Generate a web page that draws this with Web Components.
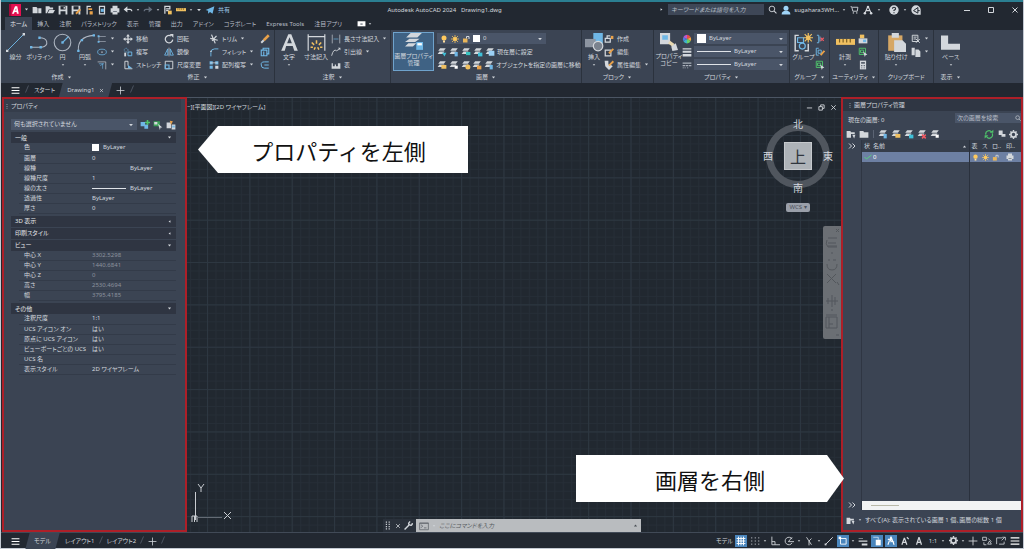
<!DOCTYPE html>
<html lang="ja">
<head>
<meta charset="utf-8">
<title>Autodesk AutoCAD 2024 Drawing1.dwg</title>
<style>
:root{
  --bg:#222831; --panel:#3b4453; --head:#2f3542; --field:#4a5568; --text:#d3d8de; --dim:#8b929e;
  --accent:#6fb7e6; --red:#ad1f28;
}
html{height:100%}
body{margin:0;min-height:100vh;box-sizing:border-box;display:flex;background:var(--bg);color:var(--text);
  font:6px/10px "Noto Sans","Noto Sans CJK JP",sans-serif;font-feature-settings:"palt"}
</style>
</head>
<body>
<cad-app></cad-app>
<script>
const RESET = `*{box-sizing:border-box}
button,input,select{font:inherit;color:inherit;font-feature-settings:inherit;background:none;border:0;padding:0;margin:0;border-radius:0;outline:0;min-width:0}
button{cursor:pointer;white-space:nowrap}a{color:inherit;text-decoration:none}`;
function define(name, css, html){
  customElements.define(name, class extends HTMLElement{
    constructor(){ super(); this.attachShadow({mode:'open'}); }
    connectedCallback(){
      const t = document.createElement('template');
      t.innerHTML = '<style>' + RESET + css + '</style>' + (typeof html === 'function' ? html(this) : html);
      this.shadowRoot.replaceChildren(t.content.cloneNode(true));
    }
  });
}

/* ---------- icons, 16 x 16 grid ---------- */
const W='#d3d7dc', B='#6fb7e6', Y='#f0c060', G='#4fc36b', O='#e8a14a';
const layers = c => `<path fill="${W}" d="M5 2h9l-3 4H2zM4 7h8l-3 4H1z"/>${c}`;
const ICONS = {
  down:`<path fill="${W}" d="M3 5h10l-5 6z"/>`,
  left:`<path fill="${W}" d="M11 4v8L5 8z"/>`,
  right:`<path fill="${W}" d="M5 4v8l6-4z"/>`,
  up:`<path fill="${W}" d="M3 11h10L8 5z"/>`,
  updark:`<path fill="#4a4f55" d="M3 11h10L8 5z"/>`,
  close:`<path stroke="${W}" stroke-width="2" d="M3 3l10 10M13 3L3 13"/>`,
  min:`<path stroke="${W}" stroke-width="2" d="M2 9h12"/>`,
  max:`<path fill="none" stroke="${W}" stroke-width="2" d="M3 3h10v10H3z"/>`,
  restore:`<path fill="none" stroke="${W}" stroke-width="2" d="M2 6h8v8H2zM6 6V2h8v8h-4"/>`,
  plus:`<path stroke="${W}" stroke-width="1.4" d="M8 1v14M1 8h14"/>`,
  menu:`<path stroke="#fff" stroke-width="1.8" d="M1 3h14M1 8h14M1 13h14"/>`,
  chev:`<path fill="none" stroke="${W}" stroke-width="2" d="M2 3l5 5-5 5M9 3l5 5-5 5"/>`,
  grip:`<path stroke="${W}" stroke-width="2" stroke-dasharray="2 2" d="M6 1v14M11 1v14"/>`,
  dots:`<path stroke="${W}" stroke-width="2" stroke-dasharray="2 3" d="M8 3v12"/>`,
  slash:`<path stroke="#5a6270" stroke-width="1.5" d="M11 1L5 15"/>`,
  logo:`<path fill="#e51050" d="M0 0h16v16H0z"/><path fill="#a30c3b" d="M0 0h3v16H0z"/><path fill="#fff" fill-rule="evenodd" d="M4 13L8 3h3l2 10h-2.500l-.4-2.500H7.500L6.500 13zM8.200 8.600h1.700L9.500 5.500z"/>`,
  new:`<path fill="${W}" d="M1 3h6l2 2v8H1zM10 5h5v8h-5z"/>`,
  open:`<path fill="${W}" d="M1 2h6l1 2h5v3H6l-3 6H1zM7 8h9l-3 5H4z"/>`,
  save:`<path fill="${W}" fill-rule="evenodd" d="M1 1h14v14H1zM4 2v5h8V2zM4 10v5h8v-5z"/><path fill="${W}" d="M9 3h2v3H9z"/>`,
  saveas:`<path fill="${W}" fill-rule="evenodd" d="M1 1h14v14H1zM4 2v5h8V2zM4 10v5h8v-5z"/><path stroke="${O}" stroke-width="3" d="M15 7l-7 7"/>`,
  webopen:`<path fill="none" stroke="${W}" stroke-width="2" d="M5 15V2h6"/><path fill="${O}" d="M7 5h6v3H7zM9 10h5v5H9z"/>`,
  websave:`<path fill="none" stroke="${W}" stroke-width="2" d="M4 2h8v12H4z"/><path fill="${B}" d="M6 6h5v5H6z"/>`,
  print:`<path fill="${W}" d="M4 1h8v4H4zM1 5h14v7h-3v3H4v-3H1z"/><path fill="#3b4453" d="M5 10h6v1H5z"/>`,
  undo:`<path fill="none" stroke="${W}" stroke-width="2" d="M4 7h7q3 0 3 3"/><path fill="${W}" d="M7 2v10L1 7z"/>`,
  redo:`<path fill="none" stroke="#66707e" stroke-width="2" d="M12 7H5q-3 0-3 3"/><path fill="#66707e" d="M9 2v10l6-5z"/>`,
  sheet:`<path fill="none" stroke="${W}" stroke-width="2" d="M3 14V2h8v5M5 6h5M5 9h4"/><path fill="${Y}" d="M8 9h6v6H8z"/>`,
  ruler:`<path fill="${Y}" d="M0 5h16v5H0z"/><path stroke="#7c5f22" d="M3 5v3M6 5v3M9 5v3M12 5v3"/>`,
  send:`<path fill="${B}" d="M1 8l14-6-3 12-4-3-3 3V9z"/>`,
  search:`<circle cx="7" cy="7" r="5" fill="none" stroke="${W}" stroke-width="1.600"/><path stroke="${W}" stroke-width="2" d="M11 11l4 4"/>`,
  user:`<circle cx="8" cy="5" r="4" fill="#9fd4f7"/><path fill="#9fd4f7" d="M1 15q0-6 7-6t7 6z"/>`,
  cart:`<path fill="none" stroke="${W}" stroke-width="1.600" d="M1 3h2l2 8h8l1-7H4"/><circle cx="6" cy="14" r="1.300" fill="${W}"/><circle cx="12" cy="14" r="1.300" fill="${W}"/>`,
  appA:`<path fill="none" stroke="${W}" stroke-width="1.800" d="M8 2l5 11M8 2L3 13M5 9h6"/><circle cx="8" cy="3" r="2" fill="${W}"/><circle cx="3" cy="13" r="2" fill="${W}"/><circle cx="13" cy="13" r="2" fill="${W}"/>`,
  help:`<circle cx="8" cy="8" r="7.500" fill="${W}"/><path fill="none" stroke="#222831" stroke-width="1.800" d="M5.500 6q0-2.500 2.500-2.500T10.500 6Q10.500 7.500 8 8.500v1.200M8 11.500v1.500"/>`,
  bubble:`<path fill="${W}" d="M8 .5a7.500 7.500 0 0 1 7.500 7.500v7.500H8A7.500 7.500 0 0 1 8 .5z"/><path fill="none" stroke="#222831" stroke-width="1.600" d="M4 9l7-5v9zM11 9h3"/>`,
  line:`<path stroke="${B}" stroke-width=".8" d="M1 15L15 1"/><path fill="${W}" d="M0 14h2v2H0zM14 0h2v2h-2z"/>`,
  poly:`<path fill="none" stroke="#aeb6c1" stroke-width=".9" d="M1 12h9q5-1 4-5-1-3-6-3"/><path fill="${B}" d="M0 11h2v2H0zM8 11h2v2H8zM7 3h2v2H7z"/>`,
  circle:`<circle cx="8" cy="8" r="7" fill="none" stroke="#aeb6c1" stroke-width=".9"/><path stroke="${B}" d="M8 8l5-5"/><path fill="${B}" d="M7 7h2v2H7z"/>`,
  arc:`<path fill="none" stroke="#aeb6c1" stroke-width=".9" d="M2 15Q1 3 15 2"/><path fill="${B}" d="M1 14h2v2H1zM4 5h2v2H4zM14 1h2v2h-2z"/>`,
  rect:`<path fill="none" stroke="#aeb6c1" d="M2 4h12M2 12h12M3 3v10"/><path fill="${B}" d="M1 2h3v3H1zM1 11h3v3H1z"/>`,
  ellipse:`<ellipse cx="8" cy="8" rx="7" ry="4.500" fill="none" stroke="${B}" stroke-width="1.200"/><path fill="${W}" d="M7 7h2v2H7z"/>`,
  hatch:`<path fill="none" stroke="${W}" d="M1 3h13v12"/><path stroke="${B}" d="M3 6h8M5 9l5-3M9 14V6"/>`,
  move:`<path stroke="${W}" stroke-width="2" d="M8 2v12M2 8h12"/><path fill="${W}" d="M8 0l3 4H5zM8 16l3-4H5zM0 8l4-3v6zM16 8l-4-3v6z"/>`,
  copy:`<circle cx="5" cy="5" r="3" fill="none" stroke="${B}" stroke-dasharray="2 1"/><path fill="none" stroke="${B}" stroke-width="1.500" d="M8 8h6v6H8z"/><path fill="${W}" d="M2 9h3v6H2z"/>`,
  stretch:`<path fill="none" stroke="${W}" stroke-width="1.500" d="M3 14V2h5v7M3 14h12"/><path fill="${B}" d="M8 8l7 5H8z"/>`,
  rotate:`<path fill="none" stroke="${W}" stroke-width="2" d="M11 3a6 6 0 1 0 3 6"/><path fill="${W}" d="M9 0h6v6z"/>`,
  mirror:`<path fill="none" stroke="${B}" stroke-width="1.400" d="M6 3v10H1zM10 3v10h5z"/><path stroke="${W}" d="M8 1v14"/>`,
  scale:`<path fill="none" stroke="${W}" stroke-width="1.500" d="M2 2h12v12H2z"/><path fill="none" stroke="${B}" stroke-width="1.800" d="M2 8h6v6H2z"/>`,
  trim:`<path fill="none" stroke="${W}" stroke-width="2" d="M4 1l6 14M12 3L5 11M2 7l12 3"/>`,
  fillet:`<path fill="none" stroke="${B}" stroke-width="1.500" d="M3 15V9q0-6 6-6h6"/><path fill="${W}" d="M2 6h2v2H2z"/>`,
  array:`<path fill="${B}" d="M1 2h5v5H1zM10 2h5v5h-5zM1 9h5v5H1z"/><path fill="${W}" d="M10 9h5v5h-5zM2 4h12v1H2z"/>`,
  erase:`<path stroke="${O}" stroke-width="4" d="M14 2L6 10"/><path stroke="${W}" stroke-width="3" d="M6 10l-4 4"/>`,
  explode:`<path fill="none" stroke="${B}" stroke-width="1.800" d="M2 5h9v9H2zM5 5V2h9v9h-3M6 7v6"/>`,
  offset:`<path fill="none" stroke="${B}" stroke-width="1.600" d="M14 3H7Q1 3 2 8q0 5 5 5h7M14 8H7"/>`,
  text:`<path fill="${W}" fill-rule="evenodd" d="M1 15L7 1h2.500l5.500 14h-3l-1.300-4H5.200L4 15zM6 8.600h4L8 3.500z"/>`,
  dim:`<path stroke="${W}" d="M1 1v14M15 1v14M1 3h14"/><path stroke="${Y}" stroke-width="1.300" d="M8 6v3M4 8l2 2M12 8l-2 2M3 12h2M11 12h2M6 14l1-2M10 14l-1-2"/>`,
  lindim:`<path stroke="${W}" d="M2 1v14M14 1v14"/><path stroke="${B}" d="M4 8h8"/>`,
  leader:`<path fill="none" stroke="${W}" stroke-width="1.400" d="M1 14Q4 2 9 6l5-3"/><path fill="${W}" d="M11 1h4v4z"/>`,
  table:`<path fill="${W}" fill-rule="evenodd" d="M1 5h2v5h3V7h2v3h3V5h4v9H1z"/>`,
  layerprop:`<path fill="${W}" d="M5 0h10l-4 4H1zM4 5h9l-4 3H0zM3 9h7l-3 3H0z"/><path fill="${B}" d="M10 8h6v7h-6z"/><path fill="#fff" d="M11 9h4v2h-4z"/>`,
  bulb:`<circle cx="8" cy="6" r="5" fill="#ffc95e"/><path fill="#ffe0a0" d="M6 11h4v4H6z"/>`,
  sun:`<circle cx="8" cy="8" r="4" fill="#ffc95e"/><path stroke="#ffc95e" stroke-width="1.500" d="M8 0v16M0 8h16M2 2l12 12M14 2L2 14"/>`,
  lock:`<path fill="#e9b65a" d="M2 7h9v8H2z"/><path fill="none" stroke="${W}" stroke-width="2" d="M9 7V3h5v5"/>`,
  white:`<path fill="#fff" d="M0 0h16v16H0z"/>`,
  lyA:layers('<path fill="#3fc0d8" d="M8 9h7l-3 6z"/>'), lyB:layers(`<path fill="${B}" d="M9 8h5v7H9z"/>`),
  lyC:layers('<path fill="#38c3c0" d="M8 8h7v5H8z"/>'), lyD:layers('<path fill="#3fc0d8" d="M8 9h7v6H8z"/>'),
  lyE:layers('<path fill="#9bd0f5" d="M6 6h9v8H6z"/>'), lyF:layers(`<path fill="${Y}" d="M7 8h8v6H7z"/>`),
  lyG:layers(`<path fill="#fff" d="M9 9h5v5H9z"/>`), lyH:layers(`<circle cx="11" cy="11" r="4" fill="${Y}"/>`),
  lyI:layers(`<path fill="${O}" d="M8 9h7v6H8z"/>`), lyR:layers('<path stroke="#ef5a63" stroke-width="2.500" d="M8 9l6 6M14 9l-6 6"/>'),
  insert:`<path fill="${B}" d="M7 0h8v9H7z"/><path fill="#8d95a1" d="M0 5h9v7H0z"/><circle cx="11" cy="11" r="4" fill="#7a828e" stroke="${W}"/>`,
  blk:`<path fill="none" stroke="${W}" stroke-width="2" d="M2 7h8v6H2zM5 7V3h5"/><path fill="${O}" d="M11 3h4v5h-4z"/>`,
  blkedit:`<path fill="none" stroke="${W}" stroke-width="2" d="M2 5h9v9H2z"/><path stroke="${O}" stroke-width="3" d="M15 3l-7 7"/>`,
  attr:`<path fill="${W}" d="M1 1h6v6h3l4 3-6 6-6-6z"/><path stroke="${O}" stroke-width="3" d="M15 2L8 9"/>`,
  match:`<path fill="${W}" d="M0 0h9v10H0z"/><path fill="${B}" d="M2 2h5v4H2z"/><path stroke="#e8d8b0" stroke-width="3" d="M8 8l4 3"/><path fill="${W}" d="M10 12l4-3 2 6-5 1z"/>`,
  wheel:`<path fill="#e94b4b" d="M8 8V1a7 7 0 0 1 6 4z"/><path fill="#f2a23c" d="M8 8l6-3a7 7 0 0 1 0 6z"/><path fill="#6ad067" d="M8 8l6 3a7 7 0 0 1-6 4z"/><path fill="#3fb4c8" d="M8 8v7a7 7 0 0 1-6-4z"/><path fill="#4c7de0" d="M8 8l-6 3a7 7 0 0 1 0-6z"/><path fill="#b55ad0" d="M8 8L2 5a7 7 0 0 1 6-4z"/>`,
  lw:`<path fill="${W}" d="M1 2h14v2H1zM1 6h14v3H1zM1 11h14v4H1z"/>`,
  lt:`<path fill="#aab1bb" d="M1 4h14v2H1zM1 8h4v2H1zM6 8h4v2H6zM11 8h4v2h-4zM1 12h2v1H1zM4 12h2v1H4zM8 12h2v1H8z"/>`,
  group:`<path fill="none" stroke="${W}" stroke-width="1.200" d="M4 2H1v13h3M9 15h3V9"/><path fill="none" stroke="${B}" d="M3 4h5v4H3z"/><circle cx="7" cy="11" r="2.500" fill="none" stroke="${B}"/><path stroke="${Y}" stroke-width="1" d="M12 0v8M8 4h8M9 1l6 6M15 1L9 7"/><circle cx="12" cy="4" r="2" fill="${Y}"/>`,
  ungroup:`<path fill="none" stroke="${B}" stroke-width="1.500" d="M3 2h3v12H3M8 4v8"/><path stroke="#ef5a63" stroke-width="1.800" d="M9 6l5 5M14 6l-5 5"/>`,
  gedit:`<path fill="none" stroke="${B}" stroke-width="1.500" d="M6 2H2v11h4M5 5h5v5H5z"/><path stroke="${O}" stroke-width="3" d="M15 6l-6 7"/>`,
  gsel:`<path fill="none" stroke="${G}" stroke-width="1.500" d="M2 2h10v10H2zM4 5h5v4H4z"/><path fill="${W}" d="M8 7l7 5-3 1-1 3z"/>`,
  paste2:`<path fill="${Y}" d="M3 1h7v6H3z"/><path fill="${W}" d="M1 7h14v8H1z"/><path fill="${B}" d="M8 9h5v4H8z"/>`,
  calc:`<path fill="${W}" d="M3 1h10v14H3z"/><path fill="#59616e" d="M5 3h6v3H5zM5 8h2v2H5zM9 8h2v2H9zM5 12h2v1H5zM9 12h2v1H9z"/>`,
  clip:`<path fill="#d6a765" d="M1 2h12v13H1z"/><path fill="${W}" d="M4 0h6v4H4zM6 6h7l3 3v7H6z"/>`,
  cut:`<path fill="none" stroke="${W}" stroke-width="1.500" d="M2 2h9v10H2zM4 5h5M4 8h4"/><path stroke="${W}" stroke-width="1.500" d="M8 8l6 6M14 8l-6 6"/>`,
  pages:`<path fill="${W}" d="M1 1h5v12H1zM7 4h5l3 3v9H7z"/>`,
  base:`<path fill="${W}" d="M0 2h6v7h10v5H0z"/>`,
  pickadd:`<path fill="${B}" d="M1 3h7v7H1zM7 7h6v7H7z"/><path stroke="${G}" stroke-width="2.500" d="M12 0v8M8 4h8"/>`,
  pick:`<path fill="#3aa356" d="M1 2h10v8H1z"/><path fill="${W}" d="M2 3h5v4H2zM8 6l7 6-3 0-1 4z"/>`,
  quick:`<path fill="${W}" d="M1 4h7v9H1zM9 7h6v8H9z"/><path fill="${O}" d="M6 1l5 1-3 6z"/><path fill="${B}" d="M10 9h4v3h-4z"/>`,
  fnew:`<path fill="${W}" d="M1 3h6l1 2h6v3H8v6H1z"/><path fill="${W}" d="M10 9l5 0-2 6z"/>`,
  folder:`<path fill="${W}" d="M1 3h6l1 2h7v9H1z"/>`,
  refresh:`<path fill="none" stroke="${G}" stroke-width="2" d="M3 9a5 5 0 0 1 9-4M13 7a5 5 0 0 1-9 5"/><path fill="${G}" d="M9 6h6V1zM7 10H1v5z"/>`,
  toggle:`<path fill="${W}" d="M3 1h7v8H3zM8 7h7v5H8z"/>`,
  gear:`<circle cx="8" cy="8" r="4.500" fill="none" stroke="${W}" stroke-width="3"/><path stroke="${W}" stroke-width="2.500" d="M8 0v3M8 13v3M0 8h3M13 8h3M2.500 2.500l2 2M11.500 11.500l2 2M13.500 2.500l-2 2M4.500 11.500l-2 2"/>`,
  check:`<path fill="none" stroke="#57cf7c" stroke-width="2" d="M1 8l4 4 10-8"/>`,
  share:`<path fill="#fff" d="M1 4h14v9H1z"/><path fill="#59616e" d="M6 8h4v2H6z"/>`,
  wrench:`<path fill="none" stroke="${W}" stroke-width="2.500" d="M1 15l8-8"/><path fill="none" stroke="${W}" stroke-width="2.500" d="M11 1q-5 4-1 6t5-3"/>`,
  prompt:`<path fill="none" stroke="#6a6f75" stroke-width="1.400" d="M1 3h14v11H1zM3 6l3 2-3 3M8 11h4M1 4h14"/>`,
  grid:`<path stroke="#fff" stroke-width="1.500" d="M4 1v14M8 1v14M12 1v14M1 4h14M1 8h14M1 12h14"/>`,
  snap:`<path stroke="${W}" stroke-width="1.600" stroke-dasharray="1.600 4" d="M2 3h14M2 8h14M2 13h14"/>`,
  ortho:`<path fill="none" stroke="${W}" stroke-width="1.400" d="M3 1v13h13M3 9h5v5"/>`,
  polar:`<path fill="none" stroke="${W}" stroke-width="1.400" d="M13 5a6 6 0 1 0 0 6M7 9h9M7 9l6-7"/>`,
  iso:`<path fill="none" stroke="${W}" stroke-width="1.400" d="M4 2l4 6v7M8 8l4 6M8 8l4-4"/>`,
  track:`<path stroke="${W}" stroke-width="1.500" d="M2 14L14 2"/><path fill="${W}" d="M1 12h3v3H1z"/>`,
  osnap:`<path fill="none" stroke="#fff" stroke-width="1.400" d="M4 4h9v9H4z"/><path fill="#fff" d="M1 1h4v4H1z"/>`,
  lwt:`<path fill="${W}" d="M1 3h7v1H1zM1 7h14v2H1zM6 12h9v3H6z"/>`,
  cycle:`<path fill="#fff" d="M6 6h8v9H6z"/><path fill="none" stroke="#fff" d="M2 2h8v4"/>`,
  anno:`<path fill="none" stroke="#fff" stroke-width="1.800" d="M8 1L3 14M8 1l5 13M8 1v9M3 5l10 5"/>`,
  annoA:`<path fill="none" stroke="${W}" stroke-width="2" d="M7 3L3 14M7 3l4 11M5 10h5M11 2l3 3"/>`,
  annoB:`<path fill="none" stroke="${W}" stroke-width="2" d="M8 2L4 14M8 2l4 12M6 10h5"/>`,
  isol:`<path fill="none" stroke="${W}" stroke-width="1.300" d="M1 2h6v5H1zM10 4l5 5M9 13l3-5 3 5zM3 10v4h4"/>`,
  clean:`<path fill="none" stroke="${W}" stroke-width="1.300" d="M1 13V3h9M9 7l5-5M10 2h5v5M5 13h8v-4"/>`
};
define('cad-icon', ':host{display:inline-flex;flex:none}svg{display:block}',
  e => { const s = e.getAttribute('s') || 10;
    return `<svg width="${s}" height="${s}" viewBox="0 0 16 16" aria-hidden="true">${ICONS[e.getAttribute('name')] || ''}</svg>`; });
const ic = (n, s=10) => `<cad-icon name="${n}" s="${s}"></cad-icon>`;
const ib = (n, s=10, label=n) => `<button aria-label="${label}">${ic(n,s)}</button>`;
const arrow = ic('down',5);

/* ---------- small building blocks ---------- */
define('cad-big', `:host{display:flex;justify-content:center;width:var(--w,24px);height:39px}
  button{width:100%;display:flex;flex-direction:column;align-items:center;line-height:7px;padding-top:1px;gap:2px}
  :host([on]) button{background:#3f6284;border:1px solid #6fa3cc;padding-top:0}
  span{display:block}`,
  e => `<button>${ic(e.getAttribute('icon'), e.getAttribute('s')||19)}<span>${e.getAttribute('label').replace('|','<br>')}</span>${e.hasAttribute('arrow')?ic('down',4):''}</button>`);
define('cad-small', `:host{display:flex;height:13px;align-items:center}
  button{display:flex;align-items:center;gap:3px}`,
  e => `<button aria-label="${e.getAttribute('label')||e.getAttribute('icon')}">${ic(e.getAttribute('icon'),e.getAttribute('s')||10)}${e.hasAttribute('label')?`<span>${e.getAttribute('label')}</span>`:''}${e.hasAttribute('arrow')?arrow:''}</button>`);
define('cad-col', ':host{display:flex;flex-direction:column;flex:none}',
  e => { e.style.width = e.getAttribute('w') + 'px'; return '<slot></slot>'; });
define('cad-panel', `:host{display:flex;flex-direction:column;flex:none;border-right:1px solid #2b323d;padding:2px 2px 0}
  div{display:flex;height:39px}
  button{display:flex;align-items:center;justify-content:center;gap:3px;height:12px}
  :host([bare]){border:0}`,
  e => `<div><slot></slot></div><button>${e.getAttribute('label')}${e.hasAttribute('plain')?'':arrow}</button>`);
define('cad-combo', `:host{display:flex;align-items:center;position:relative;height:11px;background:var(--field);padding:0 3px;gap:3px;margin:1px 0}
  select{appearance:none;flex:1;height:11px;line-height:11px}
  i{flex:0 0 var(--line,0px);height:1px;background:#dfe3e8}
  cad-icon:last-child{pointer-events:none}`,
  e => `<slot></slot>${e.hasAttribute('line')?'<i></i>':''}<select aria-label="${e.getAttribute('label')}"><option>${e.getAttribute('value')}</option></select>${ic('down',6)}`);

/* ---------- title bar ---------- */
define('cad-titlebar', `:host{display:flex;align-items:center;height:17px;border-top:2px solid #2b7f92;padding:0 4px 0 8px}
  .q,.r,.w{display:flex;align-items:center}.q{gap:3px}.q a{display:flex;gap:3px;align-items:center;color:#9ec9e8}
  h1{flex:1;margin:0;text-align:center;font-size:6px;font-weight:400;white-space:pre}
  .r{gap:4px}input{width:96px;height:11px;background:#3e4757;padding:0 3px;font-style:italic}
  input::placeholder{color:#b9c0ca}.u{display:flex;align-items:center;gap:3px}
  .w{gap:16px;margin-left:42px}button{display:flex}`,
  `<div class="q">${ib('logo',12,'アプリケーション')}${arrow}${['new','open','save','saveas','webopen','websave','print','undo'].map(n=>ib(n)).join('')}${ic('down',4)}${ib('redo')}${ic('down',4)}${ib('sheet')}${ib('ruler')}${ic('down',4)}${ib('down',6,'カスタマイズ')}<a href="#">${ic('send')}共有</a></div>
  <h1>Autodesk AutoCAD 2024   Drawing1.dwg</h1>
  <div class="r">${ic('right',5)}<input aria-label="検索" placeholder="キーワードまたは語句を入力">${ib('search',9,'検索')}<button class="u">${ic('user',10)}sugahara3WH...${ic('down',4)}</button>${ib('cart',9)}${ib('appA',10)}${ic('down',4)}<span></span>${ib('help',10)}${ic('down',4)}${ib('bubble',10)}</div>
  <div class="w">${ib('min',8,'最小化')}${ib('max',8,'最大化')}${ib('close',8,'閉じる')}</div>`);

define('cad-menu', `:host{display:flex;height:13px;padding-left:4px;align-items:stretch}
  a{display:flex;align-items:center;padding:0 5px;white-space:nowrap;color:#b7bdc6}
  a.on{background:var(--panel);color:#e6e9ed}button{display:flex;align-items:center;gap:2px;margin-left:10px}`,
  ['ホーム','挿入','注釈','パラメトリック','表示','管理','出力','アドイン','コラボレート','Express Tools','注目アプリ']
   .map((t,i)=>`<a href="#"${i?'':' class="on"'}>${t}</a>`).join('') + `<button aria-label="表示切替">${ic('share',9)}${ic('down',4)}</button>`);

/* ---------- ribbon ---------- */
const sm = (icon,label,a) => `<cad-small icon="${icon}"${label?` label="${label}"`:''}${a?' arrow':''}></cad-small>`;
const big = (icon,label,w,a,x='') => `<cad-big icon="${icon}" label="${label}" style="--w:${w}px"${a?' arrow':''} ${x}></cad-big>`;
define('cad-ribbon', `:host{display:flex;height:53px;background:var(--panel);padding-left:1px}
  .row{display:flex;height:13px;align-items:center;gap:2px;white-space:nowrap}
  .row button{display:flex;align-items:center;gap:2px}
  .prop{display:flex;align-items:center;gap:2px;height:13px}.prop cad-combo{flex:1}
  cad-combo.layer{width:109px}`,
  `<cad-panel label="作成" bare>${big('line','線分',23)}${big('poly','ポリライン',25)}${big('circle','円',21,1)}${big('arc','円弧',24,1)}<cad-col w="22">${sm('rect','',1)}${sm('ellipse','',1)}${sm('hatch','',1)}</cad-col></cad-panel>
  <cad-panel label="修正"><cad-col w="41">${sm('move','移動')}${sm('copy','複写')}${sm('stretch','ストレッチ')}</cad-col><cad-col w="45">${sm('rotate','回転')}${sm('mirror','鏡像')}${sm('scale','尺度変更')}</cad-col><cad-col w="51">${sm('trim','トリム',1)}${sm('fillet','フィレット',1)}${sm('array','配列複写',1)}</cad-col><cad-col w="12">${sm('erase')}${sm('explode')}${sm('offset')}</cad-col></cad-panel>
  <cad-panel label="注釈">${big('text','文字',24,1)}${big('dim','寸法記入',30)}<cad-col w="57">${sm('lindim','長さ寸法記入',1)}${sm('leader','引出線',1)}${sm('table','表')}</cad-col></cad-panel>
  <cad-panel label="画層">${big('layerprop','画層プロパティ|管理',41,0,'on s="18"')}<span style="width:3px"></span><cad-col w="142">
    <cad-combo class="layer" label="画層" value="0">${ic('bulb',8)}${ic('sun',8)}${ic('lock',8)}${ic('white',7)}</cad-combo>
    <div class="row">${['lyA','lyB','lyC','lyD'].map(n=>ib(n,10,'画層')).join('')}<button>${ic('lyE')}現在層に設定</button></div>
    <div class="row">${['lyF','lyG','lyH','lyI'].map(n=>ib(n,10,'画層')).join('')}<button>${ic('lyB')}オブジェクトを指定の画層に移動</button></div></cad-col></cad-panel>
  <cad-panel label="ブロック">${big('insert','挿入',20,1)}<cad-col w="47">${sm('blk','作成')}${sm('blkedit','編集')}${sm('attr','属性編集',1)}</cad-col></cad-panel>
  <cad-panel label="プロパティ">${big('match','プロパティ|コピー',26,0,'s="18"')}<cad-col w="105">
    <div class="prop">${ic('wheel')}<cad-combo label="色" value="ByLayer">${ic('white',9)}</cad-combo></div>
    <div class="prop">${ic('lw')}<cad-combo label="線の太さ" value="ByLayer" line style="--line:34px"></cad-combo></div>
    <div class="prop">${ic('lt')}<cad-combo label="線種" value="ByLayer" line style="--line:34px"></cad-combo></div></cad-col></cad-panel>
  <cad-panel label="グループ">${big('group','グループ',23)}<cad-col w="12">${sm('ungroup')}${sm('gedit')}${sm('gsel')}</cad-col></cad-panel>
  <cad-panel label="ユーティリティ">${big('ruler','計測',26,1)}<cad-col w="12">${sm('paste2')}${sm('gsel')}${sm('calc')}</cad-col></cad-panel>
  <cad-panel label="クリップボード" plain>${big('clip','貼り付け',30,1)}<cad-col w="20">${sm('cut','',1)}${sm('pages','',1)}</cad-col></cad-panel>
  <cad-panel label="表示" bare>${big('base','ベース',29,1)}</cad-panel>`);

define('cad-tabs', `:host{display:flex;align-items:center;height:14px;padding-left:10px;gap:3px;white-space:nowrap}
  :host([bottom]){height:16px;gap:5px}
  :host([bottom]) .sl{margin:0 -3px}
  button,a{display:flex;align-items:center;gap:5px}
  .on{height:100%;background:linear-gradient(105deg,transparent 4px,var(--panel) 5px calc(100% - 5px),transparent calc(100% - 4px));padding:0 9px}`,
  e => { const s = `<span class="sl">${ic('slash',8)}</span>`;
    return e.hasAttribute('bottom')
   ? `${ib('menu',9,'メニュー')}<a class="on" href="#">モデル</a><a href="#">レイアウト1</a>${s}<a href="#">レイアウト2</a>${s}${ib('plus',9,'追加')}${s}`
   : `${ib('menu',9,'メニュー')}${s}<a href="#">スタート</a><a class="on" href="#">Drawing1 ${ic('close',5)}</a>${ib('plus',9,'新規')}${s}`; });

/* ---------- properties palette ---------- */
define('cad-group', `:host{display:block;margin-bottom:1px}
  button{display:flex;width:100%;height:11px;align-items:center;justify-content:space-between;background:var(--head);padding:0 4px;color:#e8ebee}
  div{padding:0 0 1px 8px}`,
  e => `<button>${e.getAttribute('label')}${ic(e.hasAttribute('closed')?'left':'down',5)}</button>${e.hasAttribute('closed')?'':'<div><slot></slot></div>'}`);
const tbl = (rows, dim='') => `<table${dim?' class="dim"':''}>${rows.map(([a,b])=>`<tr><th scope="row">${a}</th><td>${b}</td></tr>`).join('')}</table>`;
define('cad-properties', `:host{display:flex;flex-direction:column;width:185px;border:2px solid var(--red);background:var(--panel);flex:none}
  h2{margin:0;font-size:6px;font-weight:400;height:13px;display:flex;align-items:center;background:#353d4b;border-right:4px solid var(--panel);gap:1px}
  .sel{display:flex;align-items:center;gap:3px;padding:6px 9px 1px 7px}.sel cad-combo{flex:1}.sel button{display:flex}
  section{padding:0 9px 0 7px}
  table{border-collapse:collapse;width:100%;table-layout:fixed}
  th{width:68px;text-align:left;font-weight:400}th,td{height:10px;line-height:9px;padding:0 0 0 5px;border:0;border-bottom:1px solid #333b49;white-space:nowrap}
  .dim td{color:var(--dim)}td span{display:flex;align-items:center;gap:4px;height:9px}td i{width:34px;height:1px;background:#dfe3e8}
  td i.n{background:none}`,
  `<h2>${ic('dots',6)}プロパティ</h2>
  <div class="sel"><cad-combo label="選択" value="何も選択されていません"></cad-combo>${ib('pickadd',10)}${ib('pick',10)}${ib('quick',10)}</div>
  <section>
  <cad-group label="一般">${tbl([['色',`<span>${ic('white',7)}ByLayer</span>`],['画層','0'],['線種','<span><i class="n"></i>ByLayer</span>'],['線種尺度','1'],['線の太さ','<span><i></i>ByLayer</span>'],['透過性','ByLayer'],['厚さ','0']])}</cad-group>
  <cad-group label="3D 表示" closed></cad-group><cad-group label="印刷スタイル" closed></cad-group>
  <cad-group label="ビュー">${tbl([['中心 X','3302.5298'],['中心 Y','1440.6841'],['中心 Z','0'],['高さ','2530.4694'],['幅','3795.4185']],1)}</cad-group>
  <cad-group label="その他">${tbl([['注釈尺度','1:1'],['UCS アイコン オン','はい'],['原点に UCS アイコン','はい'],['ビューポートごとの UCS','はい'],['UCS 名',''],['表示スタイル','2D ワイヤフレーム']])}</cad-group></section>`);

/* ---------- drawing area ---------- */
define('cad-canvas', `:host{display:block;position:relative;flex:1;min-width:0;background:#212830;border-top:1px solid #4b5563;overflow:hidden}
  .grid{position:absolute;inset:0;width:100%;height:100%}
  header{position:absolute;top:4px;left:0;right:4px;display:flex;justify-content:space-between}
  header div{display:flex;gap:5px}header button{display:flex;align-items:center}
  .cube{position:absolute;top:19px;right:6px;width:74px;display:flex;flex-direction:column;align-items:center;gap:8px;font-size:10px}
  .ring{position:relative;width:74px;height:78px;display:grid;grid-template-columns:14px 1fr 14px;grid-template-rows:14px 1fr 14px;place-items:center}
  .ring svg{position:absolute;left:5px;top:7px}.ring span{position:relative;line-height:14px}
  .ring b{position:relative;grid-area:2/2;width:28px;height:28px;background:#aeb3b8;color:#30363e;font:400 16px/27px "Noto Sans CJK JP",sans-serif;text-align:center;border:1px solid #c6c9cd}
  .wcs{height:9px;width:24px;background:#9a9fa9;border-radius:2px;color:#4c525c;font-size:6px;line-height:9px}
  nav{position:absolute;right:0;top:128px;width:18px;height:113px;background:#6b6f74;border-radius:2px 0 0 2px}
  .ucs{position:absolute;left:2px;bottom:4px}
  .cmd{position:absolute;left:30%;bottom:0;display:flex;align-items:center;gap:3px;background:#2a313b}
  .cmd label{display:flex;align-items:center;gap:3px;width:225px;height:13px;background:#b9bcbf;color:#4a4f55;padding:0 3px}
  .cmd button{display:flex}
  .cmd input{flex:1;font-style:italic}.cmd input::placeholder{color:#565b61}`,
  `<svg class="grid" aria-hidden="true"><defs>
   <pattern id="a" width="8.470" height="8.470" patternUnits="userSpaceOnUse" x="20" y="37"><path fill="none" stroke="#262e37" d="M.5 0v8.500M0 .5h8.500"/></pattern>
   <pattern id="b" width="42.350" height="42.350" patternUnits="userSpaceOnUse" x="20" y="37"><path fill="none" stroke="#2d3741" d="M.5 0v42.400M0 .5h42.400"/></pattern></defs>
   <rect width="100%" height="100%" fill="url(#a)"/><rect width="100%" height="100%" fill="url(#b)"/></svg>
  <header><span>−][平面図][2D ワイヤフレーム]</span><div>${ib('min',7,'最小化')}${ib('restore',7,'元に戻す')}${ib('close',7,'閉じる')}</div></header>
  <div class="cube"><div class="ring"><svg width="64" height="64"><circle cx="32" cy="32" r="28.500" fill="none" stroke="#50565e" stroke-width="7"/></svg>
    <span style="grid-area:1/2">北</span><span style="grid-area:2/1">西</span><b>上</b><span style="grid-area:2/3">東</span><span style="grid-area:3/2">南</span></div>
    <button class="wcs">WCS ▾</button></div>
  <nav aria-label="ナビゲーション"><svg width="18" height="113" fill="none" stroke="#53575c"><path d="M13 3l3 3m0-3l-3 3M5 12h9M4 14q-2 4 1 7h9M5 17h8M5 20h9M8 27h2M5 34h2m3 0h3M4 38q0 6 5 6t5-6M4 48l9 9m0-9l-9 9M14 56l2 3M9 69v12M5 72v6M12 71v8M3 75h12M8 84h2M3 91h11v11H3zM3 89h11M6 91v11M6 98h4M13 109h3"/></svg></nav>
  <svg class="ucs" width="50" height="48" fill="none" stroke="#c9cdd2" aria-hidden="true"><path d="M6.500 12v28M9 4l3 4 3-4M12 8v4"/><path d="M3 42v-6h5v6M5.500 36v6"/><path stroke="#646b74" d="M8 37.500h25"/><path d="M35 32l7 7M42 32l-7 7"/></svg>
  <div class="cmd">${ic('grip',9)}${ib('close',6,'閉じる')}${ib('wrench',9,'カスタマイズ')}<label>${ic('prompt',10)}${ic('down',4)}<input aria-label="コマンド" placeholder="ここにコマンドを入力">${ic('updark',5)}</label></div>`);

/* ---------- layer palette ---------- */
define('cad-layers', `:host{display:flex;flex-direction:column;width:182px;flex:none;border:2px solid var(--red);background:var(--panel);overflow:hidden}
  h2{margin:0;font-size:6px;font-weight:400;height:12px;display:flex;align-items:center;background:#2f3643;gap:1px;padding-left:4px}
  .top{display:flex;justify-content:space-between;align-items:center;height:17px;padding-left:5px}
  .top input{width:60px;height:10px;padding-left:2px}.top label{display:flex;align-items:center;background:var(--field);align-self:flex-start;margin-top:2px}input::placeholder{color:#b7bdc6}
  .bar{display:flex;gap:3px;align-items:center;height:12px;padding:0 3px}.bar u{flex:1}.bar s{width:1px;height:8px;background:#5b6474;margin:0 1px}
  .bar button,aside button,footer button{display:flex;align-items:center}
  .body{flex:1;display:flex}aside{width:18px;display:flex;flex-direction:column;justify-content:space-between;align-items:center;padding:2px 0 1px}
  .list{flex:1;min-width:0;display:flex;flex-direction:column;justify-content:space-between;border-left:1px solid #2f3643;background:linear-gradient(#2a313d,#2a313d) 107px 0/1px 100% no-repeat}
  table{border-collapse:collapse;table-layout:fixed;width:100%}th,td{padding:0;font-weight:400;text-align:left;height:12px;white-space:nowrap;overflow:hidden}
  th{background:#353d4a}td{height:10px;background:#6d80a3;line-height:8px;color:#fff}th:nth-child(3),td:nth-child(3){border-left:1px solid #2a313d;padding-left:2px}
  th div{display:flex;justify-content:space-between;align-items:center;padding-right:2px}
  td:first-child,th:first-child{padding-left:2px}td cad-icon{display:flex}
  .scroll{height:9px;background:#f2f3f3;padding:4px 9px}.scroll i{display:block;width:28px;height:1px;background:#b9b9a8}
  footer{display:flex;height:20px;align-items:center;padding:0 0 0 3px;gap:3px;white-space:nowrap}`,
  `<h2>${ic('dots',6)}画層プロパティ管理</h2>
  <div class="top"><span>現在の画層: 0</span><label><input aria-label="画層を検索" placeholder="次の画層を検索">${ic('search',6)}</label></div>
  <div class="bar">${ib('fnew')}${ib('folder')}<s></s>${['lyB','lyF','lyD','lyR','lyG'].map(n=>ib(n,10,'画層')).join('')}<u></u>${ib('refresh')}${ib('toggle',9)}${ib('gear',9)}</div>
  <div class="body"><aside>${ib('chev',8,'展開')}${ib('chev',8,'展開')}</aside><div class="list">
   <table><colgroup><col style="width:11px"><col style="width:96px"><col style="width:13px"><col style="width:10px"><col style="width:14px"><col style="width:15px"></colgroup>
   <tr><th>状</th><th><div>名前${ic('up',5)}</div></th><th>表</th><th>ス</th><th>ロ..</th><th>印..</th></tr>
   <tr><td>${ic('check',8)}</td><td>0</td><td>${ic('bulb',7)}</td><td>${ic('sun',7)}</td><td>${ic('lock',7)}</td><td>${ic('print',8)}</td></tr></table>
   <div class="scroll"><i></i></div></div></div>
  <footer>${ib('fnew',9)}${ic('down',4)}<span>すべて(A): 表示されている画層 1 個、画層の総数 1 個</span></footer>`);

/* ---------- callouts over the work area ---------- */
define('cad-callout', `:host{position:absolute;z-index:2;display:flex;align-items:center;justify-content:center;height:47px;width:270px;background:#fff;color:#111;
  font:22px/30px "Noto Sans CJK JP",sans-serif;font-feature-settings:normal;white-space:nowrap}
  :host([side=left]){left:197px;top:29px;clip-path:polygon(0 50%,20px 0,100% 0,100% 100%,20px 100%);padding-left:11px}
  :host([side=right]){right:179px;width:268px;bottom:30px;clip-path:polygon(0 0,calc(100% - 17px) 0,100% 50%,calc(100% - 17px) 100%,0 100%)}`, '<slot></slot>');

define('cad-status', `:host{display:flex;justify-content:space-between;height:16px;border-top:1px solid #414a57}
  div{display:flex;align-items:center;gap:2px;padding-right:2px}
  button{display:flex;align-items:center;justify-content:center;height:12px;min-width:12px}.on{background:#4a86bd}`,
  `<cad-tabs bottom></cad-tabs><div><button>モデル</button>${
   [['grid',1],['snap'],0,['ortho'],['polar'],0,['iso'],0,['track'],['osnap',1],0,['lwt'],['cycle',1],['anno',1],['annoA'],['annoB']]
   .map(x=>x?`<button aria-label="${x[0]}"${x[1]?' class="on"':''}>${ic(x[0])}</button>`:ic('down',4)).join('')}<button>1:1</button>${ic('down',4)}${ib('gear',9)}${ic('down',4)}${['plus','isol','clean','menu'].map(n=>ib(n)).join('')}</div>`);

define('cad-app', `:host{flex:1;min-width:0;display:flex;flex-direction:column;border:1px solid #c3c9d2;border-top:0}
  main{flex:1;display:flex;position:relative;padding:0 0 0 1px}`,
  `<cad-titlebar></cad-titlebar><cad-menu></cad-menu><cad-ribbon></cad-ribbon><cad-tabs></cad-tabs>
  <main><cad-properties></cad-properties><cad-canvas></cad-canvas><cad-layers></cad-layers>
  <cad-callout side="left">プロパティを左側</cad-callout><cad-callout side="right">画層を右側</cad-callout></main>
  <cad-status></cad-status>`);
</script>
</body>
</html>
